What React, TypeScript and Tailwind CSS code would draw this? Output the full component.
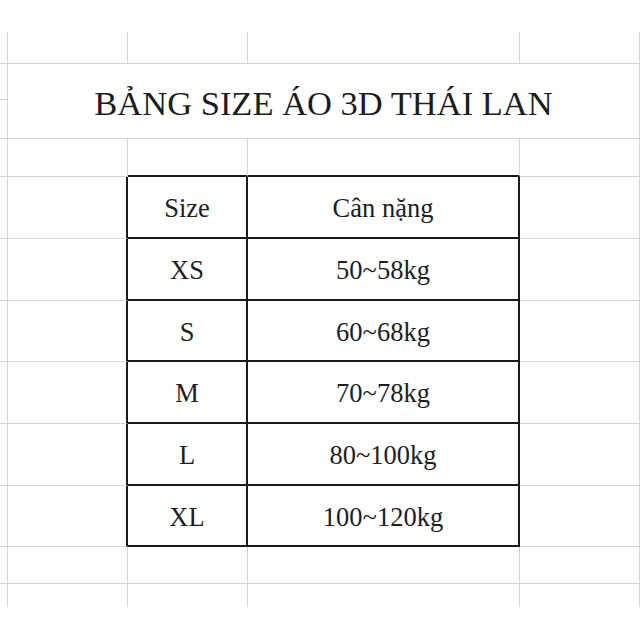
import React from 'react';

const N = 'border-r border-b border-[#d4d4d4]';
const R = 'border-r border-[#d4d4d4]';
const TOP = 'border-r border-[#d4d4d4] border-b-2 border-b-[#1a1a1a]';
const LEFT = 'border-b border-b-[#d4d4d4] border-r-2 border-r-[#1a1a1a]';
const T = 'border-r-2 border-b-2 border-[#1a1a1a] flex items-center justify-center pt-[3px] text-[26.5px] leading-none text-[#1e1e1e]';

const rows: [string, string][] = [
  ['Size', 'Cân nặng'],
  ['XS', '50~58kg'],
  ['S', '60~68kg'],
  ['M', '70~78kg'],
  ['L', '80~100kg'],
  ['XL', '100~120kg'],
];

export default function App() {
  return (
    <div className="w-[640px] h-[640px] bg-white overflow-hidden [font-family:'Liberation_Serif','Times_New_Roman',serif]">
      <div className="h-[32px]" />
      <div className="grid grid-cols-[8px_120px_120px_272px_120px] grid-rows-[32px_36px_39px_38px_62px_62px_61px_62px_62px_61px_37px_23px]">
        {/* r1 */}
        <div className={N} />
        <div className={N} />
        <div className={N} />
        <div className={N} />
        <div className={N} />
        {/* title */}
        <div className="col-start-2 col-span-4 row-start-2 row-span-2 border-r border-b border-[#d4d4d4] flex items-center justify-center pt-[4px] text-[34.5px] leading-none text-[#1c1c1c]">
          BẢNG SIZE ÁO 3D THÁI LAN
        </div>
        <div className="col-start-1 row-start-2 border-r border-b border-[#d4d4d4]" />
        <div className="col-start-1 row-start-3 border-r border-b border-[#d4d4d4]" />
        {/* r4 */}
        <div className="col-start-1 row-start-4 border-r border-b border-[#d4d4d4]" />
        <div className={N} />
        <div className={TOP} />
        <div className={TOP} />
        <div className={N} />
        {/* table rows */}
        {rows.map(([a, b]) => (
          <React.Fragment key={a}>
            <div className={N} />
            <div className={LEFT} />
            <div className={T}>{a}</div>
            <div className={T}>{b}</div>
            <div className={N} />
          </React.Fragment>
        ))}
        {/* r11 */}
        <div className={N} />
        <div className={N} />
        <div className={N} />
        <div className={N} />
        <div className={N} />
        {/* r12 */}
        <div className={R} />
        <div className={R} />
        <div className={R} />
        <div className={R} />
        <div className={R} />
      </div>
    </div>
  );
}
